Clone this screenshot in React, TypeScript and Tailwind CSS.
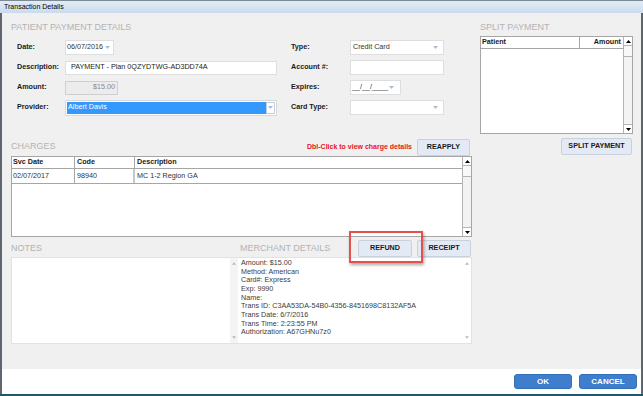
import React from "react";

function Tri({ up = false, color = "#000", w = 5, h = 3 }: { up?: boolean; color?: string; w?: number; h?: number }) {
  return (
    <svg width={w} height={h} viewBox="0 0 5 3">
      {up ? <polygon points="0,3 5,3 2.5,0" fill={color} /> : <polygon points="0,0 5,0 2.5,3" fill={color} />}
    </svg>
  );
}

function ScrollBar() {
  return (
    <div className="w-[9px] shrink-0 flex flex-col border-l border-[#b4b4b4] bg-[#f3f3f3]">
      <div className="h-[9px] flex items-center justify-center bg-white border-b border-[#b4b4b4]">
        <Tri up />
      </div>
      <div className="h-[11px] bg-[#f8f8f8] border-b border-[#b4b4b4]" />
      <div className="flex-1" />
      <div className="h-[9px] flex items-center justify-center bg-white border-t border-[#b4b4b4]">
        <Tri />
      </div>
    </div>
  );
}

function FaintScroll({ className = "" }: { className?: string }) {
  return (
    <div className={"w-[8px] shrink-0 flex flex-col items-center justify-between py-[4px] " + className}>
      <Tri up color="#b8b8b8" w={4} h={3} />
      <Tri color="#b8b8b8" w={4} h={3} />
    </div>
  );
}

function Label({ children }: { children: React.ReactNode }) {
  return <div className="font-bold text-[#1a1a1a] self-center">{children}</div>;
}

function Btn({ children, className = "" }: { children: React.ReactNode; className?: string }) {
  return (
    <div
      className={
        "h-[17px] flex items-center justify-center bg-[#e3eaf5] border border-[#c9d1dd] rounded-[2px] font-bold text-[#1a1a1a] " +
        className
      }
    >
      {children}
    </div>
  );
}

function Select({ text, className = "" }: { text: string; className?: string }) {
  return (
    <div className={"h-[15px] flex items-center bg-white border border-[#dedede] pl-[1px] pr-[3px] self-center " + className}>
      <span className="flex-1 text-[#333] whitespace-nowrap">{text}</span>
      <Tri color="#a9bdd3" />
    </div>
  );
}

export default function App() {
  return (
    <div className="relative w-[643px] h-[396px] flex flex-col overflow-hidden font-['Liberation_Sans',Arial,sans-serif] text-[7.2px] text-[#222] bg-[#f0f0f0]">
      {/* Title bar */}
      <div className="h-[13px] shrink-0 flex items-center pl-[4px] bg-gradient-to-b from-[#e2ecf6] to-[#cadbed] border-t border-[#7d8a96] text-[7px] text-black">
        Transaction Details
      </div>

      <div className="flex-1 flex flex-col border-x-2 border-[#5f666d]">
        {/* Body */}
        <div className="h-[356px] flex pl-[9px] gap-[8px] bg-[#f0f0f0]">
          {/* Left column */}
          <div className="w-[461px] flex flex-col">
            <div className="mt-[8px] h-[13px] leading-[13px] text-[9px] text-[#b3b3b3]">PATIENT PAYMENT DETAILS</div>

            <div className="mt-[6px] pl-[6px] grid grid-cols-[48px_212px_14px_59px_94px] auto-rows-[15px] gap-y-[5px]">
              <Label>Date:</Label>
              <div className="flex">
                <Select text="06/07/2016" className="w-[49px] h-[13px]" />
              </div>
              <div />
              <Label>Type:</Label>
              <Select text="Credit Card" className="w-[94px] pl-[2px] pr-[5px]" />

              <Label>Description:</Label>
              <div className="h-[14px] self-center flex items-center bg-white border border-[#dedede] pl-[5px] text-[#222]">
                PAYMENT - Plan 0QZYDTWG-AD3DD74A
              </div>
              <div />
              <Label>Account #:</Label>
              <div className="h-[15px] self-center bg-white border border-[#dedede]" />

              <Label>Amount:</Label>
              <div className="flex">
                <div className="w-[53px] h-[14px] self-center flex items-center justify-end pr-[2px] bg-[#ececec] border border-[#cfcfcf] text-[#8a8a8a]">
                  $15.00
                </div>
              </div>
              <div />
              <Label>Expires:</Label>
              <div className="flex">
                <Select text="__/__/____" className="w-[51px] pr-[6px]" />
              </div>

              <Label>Provider:</Label>
              <div className="h-[16px] self-center flex items-stretch bg-white border border-[#d8d8d8] p-[1px]">
                <div className="flex-1 flex items-center bg-[#3399ff] text-white pl-[1px]">Albert Davis</div>
                <div className="w-[9px] flex items-center justify-center bg-white border border-[#bfcfe0]">
                  <Tri color="#a9bdd3" />
                </div>
              </div>
              <div />
              <Label>Card Type:</Label>
              <Select text="" className="w-[94px] pr-[5px]" />
            </div>

            {/* Charges header */}
            <div className="mt-[23px] h-[18px] flex items-center">
              <div className="text-[9px] text-[#b3b3b3]">CHARGES</div>
              <div className="ml-auto text-[7px] font-bold text-[#e8141c]">Dbl-Click to view charge details</div>
              <Btn className="w-[53px] ml-[5px] mr-[2px]">REAPPLY</Btn>
            </div>

            {/* Charges table */}
            <div className="h-[81px] flex bg-white border border-[#a6a6a6]">
              <div className="flex-1 flex flex-col">
                <div className="h-[12px] flex border-b border-[#a6a6a6] font-bold text-[#1a1a1a]">
                  <div className="w-[63px] border-r border-[#a6a6a6] pl-[1px] flex items-center">Svc Date</div>
                  <div className="w-[60px] border-r border-[#a6a6a6] pl-[2px] flex items-center">Code</div>
                  <div className="flex-1 pl-[2px] flex items-center">Description</div>
                </div>
                <div className="h-[15px] flex border-b border-[#a6a6a6] text-[#333]">
                  <div className="w-[63px] border-r border-[#a6a6a6] pl-[1px] flex items-center">02/07/2017</div>
                  <div className="w-[60px] border-r-2 border-[#c8c8c8] pl-[2px] flex items-center">98940</div>
                  <div className="flex-1 pl-[2px] flex items-center">MC 1-2 Region GA</div>
                </div>
              </div>
              <ScrollBar />
            </div>

            {/* Notes / merchant header */}
            <div className="mt-[3px] h-[17px] flex items-start">
              <div className="w-[229px] pt-[3px] text-[9px] leading-[11px] text-[#b3b3b3]">NOTES</div>
              <div className="w-[118px] pt-[3px] text-[9px] leading-[11px] text-[#b3b3b3]">MERCHANT DETAILS</div>
              <Btn className="w-[54px] h-[16px]">REFUND</Btn>
              <Btn className="w-[54px] h-[16px] ml-[5px]">RECEIPT</Btn>
            </div>

            {/* Notes / merchant boxes */}
            <div className="h-[87px] flex border border-[#e2e2e2]">
              <div className="w-[218px] bg-white" />
              <FaintScroll className="bg-[#f4f4f4]" />
              <div className="flex-1 flex bg-white">
                <div className="flex-1 pl-[3px] pt-[1px] leading-[8.67px] text-[#3c3c3c]">
                  <div>Amount: $15.00</div>
                  <div>Method: American</div>
                  <div>Card#: Express</div>
                  <div>Exp: 9990</div>
                  <div>Name:</div>
                  <div>Trans ID: C3AA53DA-54B0-4356-8451698C8132AF5A</div>
                  <div>Trans Date: 6/7/2016</div>
                  <div>Trans Time: 2:23:55 PM</div>
                  <div>Authorization: A67GHNu7z0</div>
                </div>
                <FaintScroll />
              </div>
            </div>
          </div>

          {/* Right column */}
          <div className="w-[153px] flex flex-col">
            <div className="mt-[8px] h-[13px] leading-[13px] text-[9px] text-[#b3b3b3]">SPLIT PAYMENT</div>
            <div className="mt-[2px] h-[98px] flex bg-white border border-[#a6a6a6]">
              <div className="flex-1 flex flex-col">
                <div className="h-[12px] flex border-b border-[#a6a6a6] font-bold text-[#1a1a1a]">
                  <div className="w-[99px] border-r border-[#a6a6a6] pl-[1px] flex items-center">Patient</div>
                  <div className="flex-1 pr-[2px] flex items-center justify-end">Amount</div>
                </div>
              </div>
              <ScrollBar />
            </div>
            <Btn className="mt-[4px] self-end w-[71px] mr-[1px]">SPLIT PAYMENT</Btn>
          </div>
        </div>

        {/* Footer */}
        <div className="h-[25px] flex items-center justify-end gap-[7px] pr-[4px] bg-white">
          <div className="w-[58px] h-[15px] flex items-center justify-center rounded-[3px] bg-[#3f7dcd] border border-[#346fbd] text-white font-bold text-[8px]">
            OK
          </div>
          <div className="w-[58px] h-[15px] flex items-center justify-center rounded-[3px] bg-[#3f7dcd] border border-[#346fbd] text-white font-bold text-[8px]">
            CANCEL
          </div>
        </div>
      </div>
      <div className="h-[2px] shrink-0 bg-[#22566a]" />

      {/* Annotation highlight */}
      <div className="absolute left-[349px] top-[231px] w-[74px] h-[32px] border-2 border-[#e2514b] shadow-[1px_2px_3px_rgba(0,0,0,0.35)]" />
    </div>
  );
}
